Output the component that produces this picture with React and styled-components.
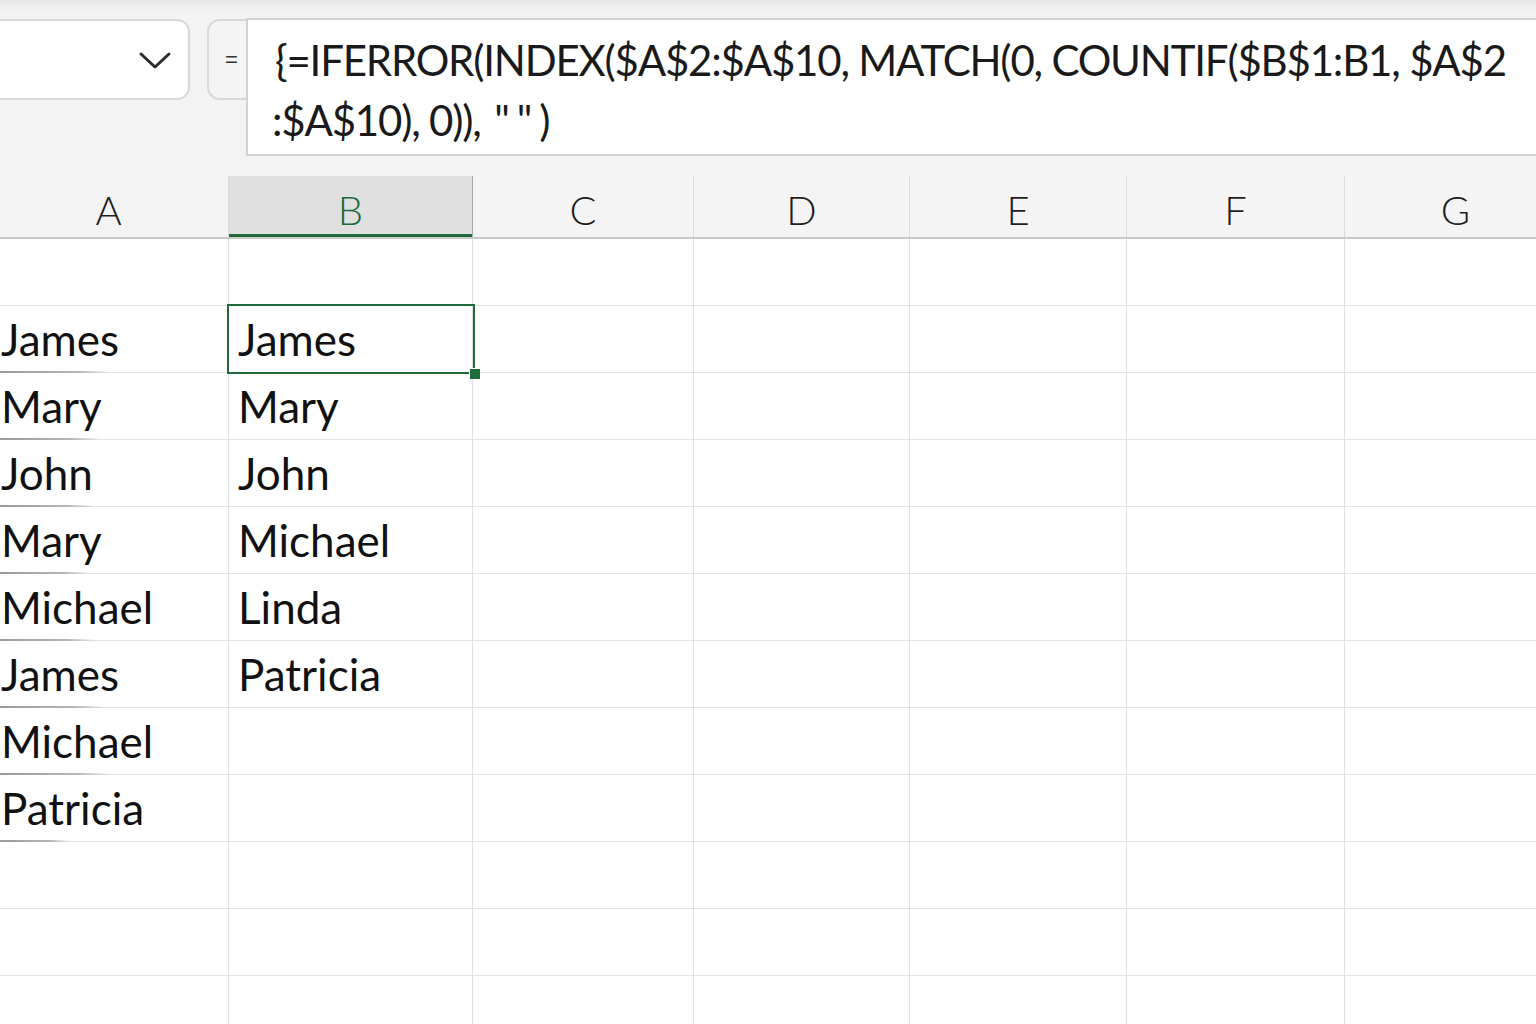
import React from 'react';
import styled, { createGlobalStyle } from 'styled-components';

const GlobalStyle = createGlobalStyle`
	html, body {
		margin: 0;
		padding: 0;
		background: #f3f3f3;
	}
	body {
		font-family: 'Lato', 'Liberation Sans', sans-serif;
		color: #111;
	}
`;

const columns = [
	{ key: 'A', width: 240, pad: 12 },
	{ key: 'B', width: 244, pad: 9 },
	{ key: 'C', width: 221, pad: 10 },
	{ key: 'D', width: 216, pad: 10 },
	{ key: 'E', width: 217, pad: 10 },
	{ key: 'F', width: 218, pad: 10 },
	{ key: 'G', width: 222, pad: 10 },
];

const rows = [
	{ a: '', b: '' },
	{ a: 'James', b: 'James', streak: 110 },
	{ a: 'Mary', b: 'Mary', streak: 100 },
	{ a: 'John', b: 'John', streak: 95 },
	{ a: 'Mary', b: 'Michael', streak: 90 },
	{ a: 'Michael', b: 'Linda', streak: 95 },
	{ a: 'James', b: 'Patricia', streak: 105 },
	{ a: 'Michael', b: '', streak: 110 },
	{ a: 'Patricia', b: '', streak: 70 },
	{ a: '', b: '' },
	{ a: '', b: '' },
	{ a: '', b: '' },
];

const template = columns.map((c) => `${c.width}px`).join(' ');

const App = () => {
	return (
		<>
			<GlobalStyle />
			<Page>
				<FormulaBar>
					<NameBox>
						<svg width='34' height='20' viewBox='0 0 34 20'>
							<path d='M3 4 L17 17 L31 4' fill='none' stroke='#2b2b2b' strokeWidth='3' strokeLinecap='round' strokeLinejoin='round' />
						</svg>
					</NameBox>
					<EqualsBox>=</EqualsBox>
					<FormulaInput>
						<FormulaLine>{'{=IFERROR(INDEX($A$2:$A$10, MATCH(0, COUNTIF($B$1:B1, $A$2'}</FormulaLine>
						<FormulaLine $shift={-3}>
							{':$A$10), 0)), '}
							<Quotes>""</Quotes>
							{')'}
						</FormulaLine>
					</FormulaInput>
				</FormulaBar>

				<Sheet>
					<HeaderRow style={{ gridTemplateColumns: template }}>
						{columns.map((c) => (
							<ColHeader key={c.key} $active={c.key === 'B'}>
								{c.key}
							</ColHeader>
						))}
					</HeaderRow>
					{rows.map((r, i) => (
						<Row key={i} style={{ gridTemplateColumns: template }}>
							{columns.map((c) => {
								const value = c.key === 'A' ? r.a : c.key === 'B' ? r.b : '';
								return (
									<Cell key={c.key} $pad={c.pad} $streak={c.key === 'A' ? r.streak : 0}>
										{value}
										{c.key === 'B' && i === 1 && (
											<Selection>
												<Handle />
											</Selection>
										)}
									</Cell>
								);
							})}
						</Row>
					))}
				</Sheet>
			</Page>
		</>
	);
};

export default App;

const Page = styled.div`
	width: 1536px;
	height: 1024px;
	overflow: hidden;
	background: linear-gradient(to bottom, #e6e6e6 0px, #f1f1f1 10px, #f3f3f3 18px);
`;

const FormulaBar = styled.div`
	display: flex;
	align-items: flex-start;
	padding-top: 18px;
	height: 154px;
	box-sizing: border-box;
`;

const NameBox = styled.div`
	box-sizing: border-box;
	flex-shrink: 0;
	width: 202px;
	height: 81px;
	margin-top: 1px;
	margin-left: -12px;
	background: #fff;
	border: 2px solid #d8d8d8;
	border-radius: 13px;
	display: flex;
	align-items: center;
	justify-content: flex-end;
	padding-right: 16px;
`;

const EqualsBox = styled.div`
	box-sizing: border-box;
	flex-shrink: 0;
	width: 44px;
	height: 81px;
	margin-top: 1px;
	margin-left: 17px;
	background: #f4f4f4;
	border: 2px solid #d8d8d8;
	border-right: none;
	border-radius: 13px 0 0 13px;
	display: flex;
	align-items: center;
	padding-left: 16px;
	font-family: 'Liberation Sans', sans-serif;
	font-size: 22px;
	color: #333;
`;

const FormulaInput = styled.div`
	box-sizing: border-box;
	flex: 1;
	min-width: 0;
	height: 138px;
	margin-left: -5px;
	margin-right: -40px;
	background: #fff;
	border: 2px solid #d2d2d2;
	padding: 10px 0 0 27px;
	display: flex;
	flex-direction: column;
`;

const FormulaLine = styled.div`
	font-size: 42px;
	line-height: 60px;
	height: 60px;
	white-space: nowrap;
	color: #1a1a1a;
	margin-left: ${(p) => p.$shift || 0}px;
	letter-spacing: -1.2px;
`;

const Quotes = styled.span`
	letter-spacing: 7px;
	margin-left: 4px;
`;

const Sheet = styled.div`
	margin-top: 19px;
	margin-left: -11px;
`;

const HeaderRow = styled.div`
	display: grid;
	height: 66px;
	box-sizing: border-box;
	border-bottom: 2px solid #c9c9c9;
	background: #f4f4f4;
`;

const ColHeader = styled.div`
	display: flex;
	align-items: center;
	justify-content: center;
	font-size: 40px;
	font-weight: 300;
	color: ${(p) => (p.$active ? '#1d6b38' : '#1e1e1e')};
	background: ${(p) => (p.$active ? '#e0e0e0' : 'transparent')};
	border-right: 1px solid ${(p) => (p.$active ? '#a9a9a9' : '#dcdcdc')};
	box-shadow: ${(p) => (p.$active ? 'inset 0 -3px 0 #1d6b38' : 'none')};
	margin-top: 3px;
	padding-top: 6px;
`;

const Row = styled.div`
	display: grid;
	height: 67px;
	background: #fff;
`;

const Cell = styled.div`
	position: relative;
	box-sizing: border-box;
	border-right: 1px solid #e0e0e0;
	border-bottom: 1px solid #e3e3e3;
	padding-left: ${(p) => p.$pad}px;
	display: flex;
	align-items: center;
	font-size: 44px;
	color: #111;
	white-space: nowrap;

	&::after {
		content: '';
		display: ${(p) => (p.$streak ? 'block' : 'none')};
		position: absolute;
		left: 11px;
		bottom: -1px;
		width: ${(p) => p.$streak}px;
		height: 2px;
		background: linear-gradient(to right, #9a9a9a, #b5b5b5 70%, rgba(200, 200, 200, 0));
	}
`;

const Selection = styled.div`
	position: absolute;
	z-index: 5;
	left: -2px;
	top: -2px;
	right: -3px;
	bottom: -2px;
	border: 2px solid #1f6b3b;
	pointer-events: none;
`;

const Handle = styled.div`
	position: absolute;
	box-sizing: border-box;
	right: -7px;
	bottom: -7px;
	width: 11px;
	height: 11px;
	background: #1f6b3b;
	border-top: 1px solid #fff;
	border-left: 1px solid #fff;
`;
